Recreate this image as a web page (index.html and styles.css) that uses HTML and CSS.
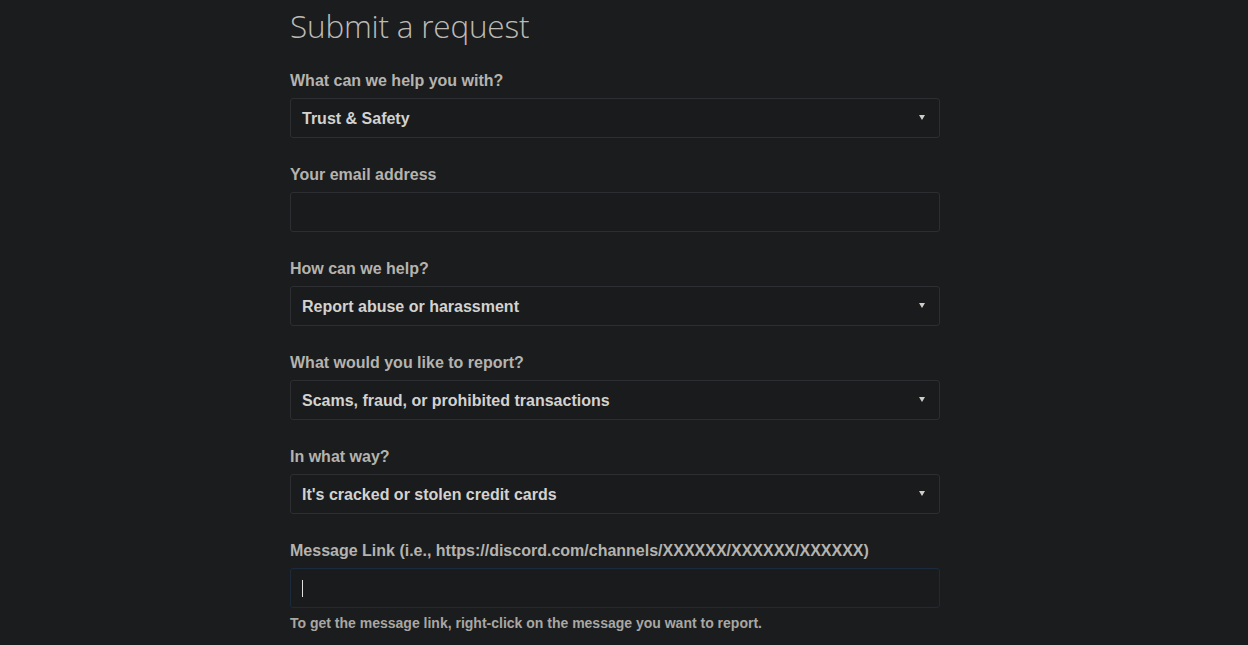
FILE: index.html
```html
<!DOCTYPE html>
<html>
<head>
<meta charset="utf-8">
<link rel="stylesheet" href="styles.css">
</head>
<body>
<main class="page">
  <h1 class="title">Submit a request</h1>
  <div class="field">
    <label class="label">What can we help you with?</label>
    <div class="box select"><span>Trust &amp; Safety</span><span class="caret"></span></div>
  </div>
  <div class="field">
    <label class="label">Your email address</label>
    <div class="box"></div>
  </div>
  <div class="field">
    <label class="label">How can we help?</label>
    <div class="box select"><span>Report abuse or harassment</span><span class="caret"></span></div>
  </div>
  <div class="field">
    <label class="label">What would you like to report?</label>
    <div class="box select"><span>Scams, fraud, or prohibited transactions</span><span class="caret"></span></div>
  </div>
  <div class="field">
    <label class="label">In what way?</label>
    <div class="box select"><span>It's cracked or stolen credit cards</span><span class="caret"></span></div>
  </div>
  <div class="field">
    <label class="label">Message Link (i.e., https://discord.com/channels/XXXXXX/XXXXXX/XXXXXX)</label>
    <div class="box focus"><span class="cursor"></span></div>
    <p class="hint">To get the message link, right-click on the message you want to report.</p>
  </div>
</main>
</body>
</html>
```
FILE: styles.css
```css
html, body {
  margin: 0;
  padding: 0;
  background: #1b1c1e;
}
.page {
  width: 650px;
  margin-left: 290px;
  font-family: "Liberation Sans", Arial, sans-serif;
  color: #b5b3ae;
}
.title {
  margin: 0;
  padding-top: 4px;
  height: 66px;
  font-family: "Open Sans", sans-serif;
  font-weight: 300;
  font-size: 31.5px;
  line-height: 44px;
  color: #bdbab5;
  letter-spacing: -0.2px;
}
.field {
  margin-bottom: 26px;
}
.label {
  display: block;
  font-size: 16px;
  line-height: 20px;
  font-weight: bold;
  padding-top: 1px;
  margin-bottom: 7px;
}
.box {
  box-sizing: border-box;
  height: 40px;
  border: 1px solid #2c2e31;
  border-radius: 3px;
  background: #1a1b1d;
  display: flex;
  align-items: center;
  justify-content: space-between;
  padding: 0 14px 0 11px;
  font-size: 16px;
  font-weight: bold;
  color: #d3d2cf;
}
.select span:first-child {
  padding-top: 1px;
}
.caret {
  width: 0;
  height: 0;
  border-left: 3.5px solid transparent;
  border-right: 3.5px solid transparent;
  border-top: 5px solid #d0cdc8;
  margin-top: -2px;
}
.focus {
  border-color: #1c2a3d;
}
.cursor {
  width: 1px;
  height: 17px;
  background: #e0e0e0;
}
.hint {
  margin: 7px 0 0;
  font-size: 14px;
  line-height: 17px;
  font-weight: bold;
  color: #a9a7a3;
}
```
